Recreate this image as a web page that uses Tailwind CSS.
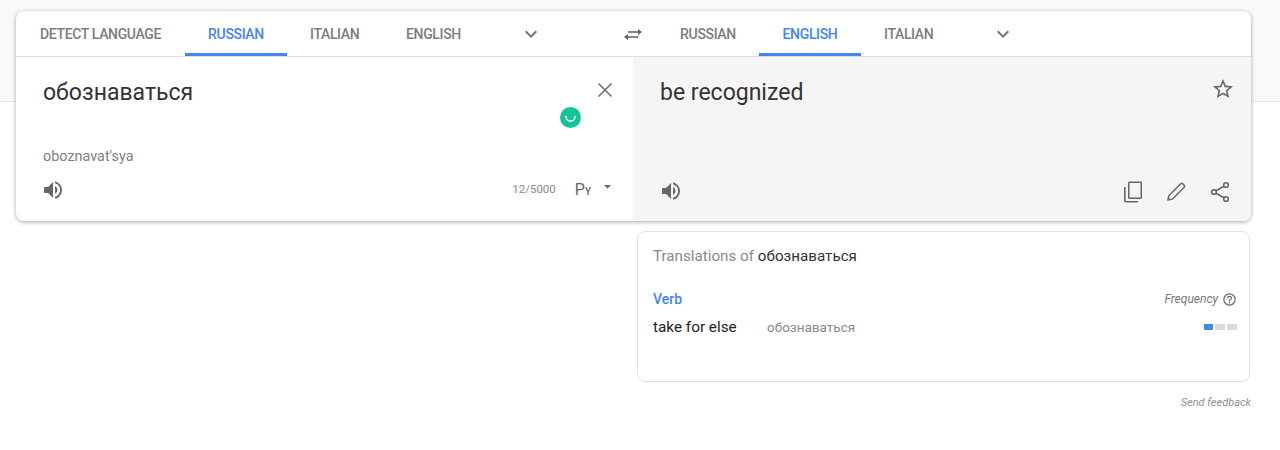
<!DOCTYPE html>
<html><head><meta charset="utf-8"><script src="https://cdn.jsdelivr.net/npm/@tailwindcss/browser@4"></script></head>
<body class="bg-white">
<div class="relative w-[1280px] h-[450px] overflow-hidden bg-white font-['Roboto',sans-serif]">
  <div class="absolute left-0 top-0 w-full h-[102px] bg-[#f9f9f9] border-b border-[#e6e6e6]"></div>
  <div class="relative pt-[11px] pl-4 w-[1251px]">
    <div class="w-[1235px] h-[210px] bg-white rounded-lg shadow-[0_1px_4px_rgba(0,0,0,0.35)] overflow-hidden flex flex-col">
      <div class="h-[46px] shrink-0 flex border-b border-[#dedede] text-sm font-medium tracking-[-0.35px] text-[#7c7c7c]">
        <div class="w-[617px] flex shrink-0">
          <div class="w-[169px] pl-6 pt-[15px] leading-4">DETECT LANGUAGE</div>
          <div class="w-[102px] h-[45px] text-center pt-[15px] leading-4 text-[#4285f4] border-b-[3px] border-[#4285f4]">RUSSIAN</div>
          <div class="w-[98px] pl-[23px] pt-[15px] leading-4">ITALIAN</div>
          <div class="w-[98px] pl-[21px] pt-[15px] leading-4">ENGLISH</div>
          <div class="w-[90px] flex items-center justify-center pl-[6px] pt-px">
            <svg width="24" height="24" viewBox="0 0 24 24" fill="#757575"><path d="M7.400 8.600 12 13.200l4.600-4.600L18 10l-6 6-6-6z"/></svg>
          </div>
        </div>
        <div class="w-[126px] shrink-0 flex items-center justify-start">
          <svg class="ml-[-10px] mt-px" width="20" height="14" viewBox="0 0 20 14" fill="#606060"><path d="M5 4.300h10V2l4 3-4 3V5.700H5z"/><path d="M15 8.300H5V6L1 9l4 3V9.700h10z" transform="translate(0 1)"/></svg>
        </div>
        <div class="flex">
          <div class="w-[56px] -ml-[79px] mr-[23px] pt-[15px] leading-4 text-center">RUSSIAN</div>
          <div class="w-[102px] h-[45px] text-center pt-[15px] leading-4 text-[#4285f4] border-b-[3px] border-[#4285f4]">ENGLISH</div>
          <div class="w-[100px] pl-[23px] pt-[15px] leading-4">ITALIAN</div>
          <div class="w-[83px] flex items-center justify-center pt-px">
            <svg width="24" height="24" viewBox="0 0 24 24" fill="#757575"><path d="M7.400 8.600 12 13.200l4.600-4.600L18 10l-6 6-6-6z"/></svg>
          </div>
        </div>
      </div>
      <div class="flex flex-1">
        <div class="relative w-[617px] shrink-0 pl-[27px] pt-[21px]">
          <div class="text-[23px] leading-[30px] text-[#333]">обознаваться</div>
          <div class="mt-[40px] text-[14.400px] leading-[18px] text-[#808080]">oboznavat'sya</div>
          <div class="mt-[12px] flex items-center h-6 pr-[20px]">
            <svg class="-ml-[3px]" width="26" height="26" viewBox="0 0 24 24" fill="#666"><path d="M3 9v6h4l5 5V4L7 9H3zm13.500 3A4.500 4.500 0 0 0 14 7.970v8.050A4.470 4.470 0 0 0 16.500 12zM14 3.230v2.060a7 7 0 0 1 0 13.420v2.060a9 9 0 0 0 0-17.540z" transform="translate(1 1) scale(.92)"/></svg>
            <span class="ml-auto mr-[19px] text-[11.500px] text-[#8a8a8a]">12/5000</span>
            <span class="text-[16px] leading-5 text-[#666] mt-px mr-[5px]">Р<span class="text-[10px] font-medium">Y</span></span>
            <svg class="ml-[7px] mb-[6px]" width="10" height="10" viewBox="0 0 10 10" fill="#666"><path d="M1 3h7L4.500 6.500z"/></svg>
          </div>
          <svg class="absolute right-[18px] top-[23px]" width="20" height="20" viewBox="0 0 20 20" fill="none" stroke="#757575" stroke-width="1.700"><path d="M3.500 3.500l13 13M16.500 3.500l-13 13"/></svg>
          <div class="absolute left-[544px] top-[50px] w-[21px] h-[21px] rounded-full bg-[#15c39a] flex items-center justify-center">
            <svg width="13" height="13" viewBox="0 0 13 13" fill="none" stroke="#fff" stroke-width="1.300" stroke-linecap="round"><path d="M2 5.500a4.500 4.500 0 0 0 9 0"/></svg>
          </div>
        </div>
        <div class="relative flex-1 bg-[#f5f5f5] pl-[27px] pt-[21px]">
          <div class="text-[23px] leading-[30px] text-[#333]">be recognized</div>
          <svg class="absolute right-[16px] top-[20px]" width="24" height="24" viewBox="0 0 24 24" fill="#666"><path d="M22 9.240l-7.190-.620L12 2 9.190 8.630 2 9.240l5.460 4.730L5.820 21 12 17.270 18.180 21l-1.630-7.030L22 9.240zM12 15.400l-3.760 2.270 1-4.280-3.320-2.880 4.380-.380L12 6.100l1.710 4.040 4.380.380-3.320 2.880 1 4.280L12 15.400z"/></svg>
          <div class="absolute left-[25px] right-[19px] top-[123px] flex items-center h-6">
            <svg class="-mt-[2px]" width="26" height="26" viewBox="0 0 24 24" fill="#666"><path d="M3 9v6h4l5 5V4L7 9H3zm13.500 3A4.500 4.500 0 0 0 14 7.970v8.050A4.470 4.470 0 0 0 16.500 12zM14 3.230v2.060a7 7 0 0 1 0 13.420v2.060a9 9 0 0 0 0-17.540z" transform="translate(1 1) scale(.92)"/></svg>
            <svg class="ml-auto" width="24" height="24" viewBox="0 0 24 24" fill="#666"><path d="M5 7H3v14c0 .9.900 1.500 1.500 1.500H17v-1.600H4.600V7zM19.500 1.500H8.500A1.500 1.500 0 0 0 7 3v14.500C7 18.300 7.700 19 8.500 19h11c.8 0 1.500-.7 1.500-1.500V3c0-.8-.7-1.500-1.500-1.500zm0 16h-11V3h11v14.500z"/></svg>
            <svg class="ml-[19px]" width="24" height="24" viewBox="0 0 24 24" fill="none" stroke="#707070" stroke-width="1.700" stroke-linejoin="round"><path d="M4 20l1-4.500L16.500 4c.7-.7 1.800-.7 2.500 0l1 1c.7.7.7 1.800 0 2.500L8.500 19z"/></svg>
            <svg class="ml-[20px]" width="24" height="24" viewBox="0 0 24 24" fill="none" stroke="#666" stroke-width="1.600"><circle cx="18" cy="5" r="2.300"/><circle cx="6" cy="12" r="2.300"/><circle cx="18" cy="19" r="2.300"/><path d="M8 10.800l8-4.600M8 13.200l8 4.600"/></svg>
          </div>
        </div>
      </div>
    </div>
    <div class="ml-[621px] mt-[10px] w-[613px] h-[151px] border border-[#e2e2e2] rounded-lg pl-[15px] pr-[12px] pt-[14px] relative">
      <div class="text-[15.200px] leading-5 text-[#8a8a8a]">Translations of <span class="text-[#333]">обознаваться</span></div>
      <div class="flex justify-between items-center mt-[23px] h-5">
        <span class="text-sm font-medium text-[#4285f4]">Verb</span>
        <span class="flex items-center gap-[4px] text-xs italic text-[#777]">Frequency
          <svg width="15" height="15" viewBox="0 0 24 24" fill="#666"><path d="M11 18h2v-2h-2v2zm1-16a10 10 0 1 0 0 20 10 10 0 0 0 0-20zm0 18a8 8 0 1 1 0-16 8 8 0 0 1 0 16zm0-14a4 4 0 0 0-4 4h2a2 2 0 1 1 4 0c0 2-3 1.750-3 5h2c0-2.250 3-2.500 3-5a4 4 0 0 0-4-4z"/></svg>
        </span>
      </div>
      <div class="flex items-center mt-[8px] h-5">
        <span class="w-[114px] text-[15.300px] text-[#222] shrink-0">take for else</span>
        <span class="text-[13.500px] text-[#8a8a8a]">обознаваться</span>
        <span class="ml-auto flex gap-[2px]">
          <span class="block w-[9px] h-[6px] bg-[#4285f4]"></span>
          <span class="block w-[10px] h-[6px] bg-[#dadada]"></span>
          <span class="block w-[10px] h-[6px] bg-[#dadada]"></span>
        </span>
      </div>
    </div>
    <div class="w-[1235px] text-right mt-[13px] text-[11px] leading-4 italic text-[#8f8f8f]">Send feedback</div>
  </div>
</div>
</body></html>
